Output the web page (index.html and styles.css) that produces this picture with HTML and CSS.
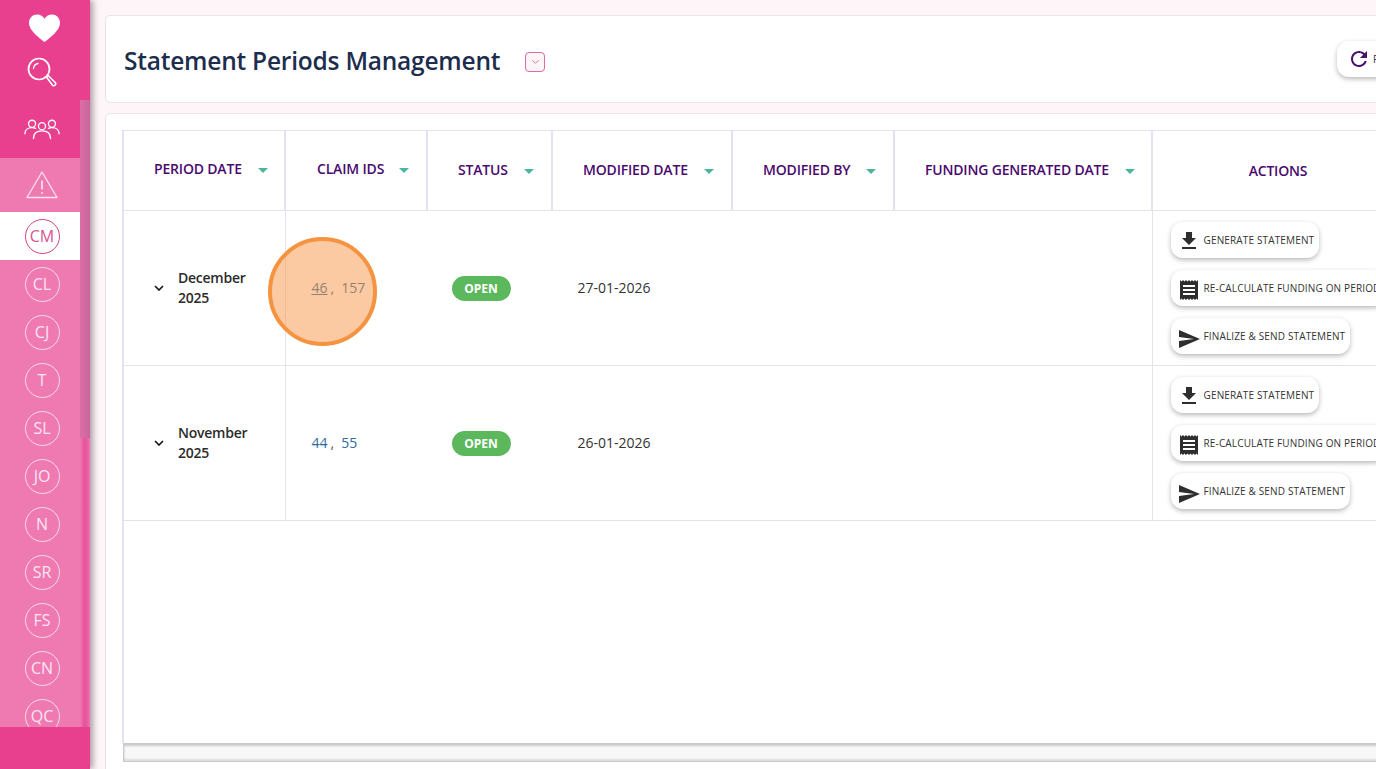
FILE: index.html
```html
<!DOCTYPE html>
<html lang="en">
<head>
<meta charset="utf-8">
<title>Statement Periods Management</title>
<link rel="stylesheet" href="styles.css">
</head>
<body>
<aside class="sidebar">
  <div class="side-top">
    <svg class="ic-heart" viewBox="0 0 34 30"><path d="M17 29.500C12 25 1 18 1 9.500 1 4.500 5 1 9.500 1 12.800 1 15.500 2.800 17 5.500 18.500 2.800 21.200 1 24.500 1 29 1 33 4.500 33 9.500 33 18 22 25 17 29.500Z" fill="#fff"/></svg>
    <svg class="ic-search" viewBox="0 0 30 30" fill="none" stroke="#fff"><circle cx="12" cy="12" r="10.500" stroke-width="1.700"/><path d="M6.500 11.500C6.800 8.800 8.600 7 11 6.500" stroke-width="1.300" stroke-linecap="round"/><path d="M19.500 20 21.200 18.500 28.200 25.500C29 26.500 28.800 27.500 28 28.200 27.200 28.900 26.200 28.900 25.500 28.200Z" stroke-width="1.600"/></svg>
    <svg class="ic-people" viewBox="0 0 38 22" fill="none" stroke="#fff" stroke-width="1.400" stroke-linecap="round"><circle cx="8.500" cy="5.500" r="3.700"/><circle cx="19" cy="8" r="3.700"/><circle cx="29.500" cy="5.500" r="3.700"/><path d="M1 16c0-4 3-6.500 7.500-6.500 1.500 0 2.700.3 3.700.8"/><path d="M37 16c0-4-3-6.500-7.500-6.500-1.500 0-2.700.3-3.700.8"/><path d="M10 21c0-5 3.500-8 9-8s9 3 9 8"/></svg>
  </div>
  <nav class="side-list">
    <div class="side-alert">
      <svg class="ic-alert" viewBox="0 0 32 28" fill="none" stroke="#fbe3ef" stroke-width="1.300" stroke-linejoin="round"><path d="M16 1.500 31 27H1Z"/><path d="M16 10v9" stroke-width="1.800"/><circle cx="16" cy="22.500" r="1" fill="#fbe3ef" stroke="none"/></svg>
    </div>
    <div class="side-item active"><span class="badge">CM</span></div>
    <div class="side-item"><span class="badge">CL</span></div>
    <div class="side-item"><span class="badge">CJ</span></div>
    <div class="side-item"><span class="badge">T</span></div>
    <div class="side-item"><span class="badge">SL</span></div>
    <div class="side-item"><span class="badge">JO</span></div>
    <div class="side-item"><span class="badge">N</span></div>
    <div class="side-item"><span class="badge">SR</span></div>
    <div class="side-item"><span class="badge">FS</span></div>
    <div class="side-item"><span class="badge">CN</span></div>
    <div class="side-item"><span class="badge">QC</span></div>
  </nav>
  <div class="side-bottom"></div>
  <div class="side-scroll"><div class="side-thumb"></div></div>
</aside>

<main class="main">
  <section class="card title-card">
    <h1 class="title">Statement Periods Management</h1>
    <button class="collapse" aria-label="Collapse"><svg viewBox="0 0 10 6" fill="none" stroke="#d9669f" stroke-width="1"><path d="M1.500 1 5 4.500 8.500 1"/></svg></button>
    <button class="refresh"><svg viewBox="0 0 24 24"><path d="M17.650 6.350C16.200 4.900 14.210 4 12 4c-4.420 0-7.990 3.580-7.990 8s3.570 8 7.990 8c3.730 0 6.840-2.550 7.730-6h-2.080c-.82 2.330-3.040 4-5.650 4-3.310 0-6-2.690-6-6s2.690-6 6-6c1.660 0 3.140.69 4.220 1.780L13 11h7V4l-2.350 2.350z" fill="#47106b"/></svg><span>Refresh</span></button>
  </section>

  <section class="card table-card">
    <div class="table-wrap">
      <table class="grid">
        <colgroup>
          <col class="c1"><col class="c2"><col class="c3"><col class="c4"><col class="c5"><col class="c6"><col class="c7">
        </colgroup>
        <thead>
          <tr>
            <th class="raise"><span class="th-in">PERIOD DATE<i class="caret"></i></span></th>
            <th class="raise th-claim"><span class="th-in">CLAIM IDS<i class="caret"></i></span></th>
            <th><span class="th-in">STATUS<i class="caret"></i></span></th>
            <th><span class="th-in">MODIFIED DATE<i class="caret"></i></span></th>
            <th><span class="th-in">MODIFIED BY<i class="caret"></i></span></th>
            <th><span class="th-in">FUNDING GENERATED DATE<i class="caret"></i></span></th>
            <th class="th-actions">ACTIONS</th>
          </tr>
        </thead>
        <tbody>
          <tr>
            <td><div class="period"><svg class="chev" viewBox="0 0 10 6" fill="none" stroke="#111" stroke-width="1.600"><path d="M1 1 5 5 9 1"/></svg><span>December<br>2025</span></div></td>
            <td class="ids"><a class="id-link hover">46</a><span class="sep">,</span><a class="id-link">157</a></td>
            <td class="status"><span class="pill">OPEN</span></td>
            <td class="date">27-01-2026</td>
            <td></td>
            <td></td>
            <td class="actions">
              <button class="act"><svg viewBox="0 0 24 24"><path d="M19 9h-4V3H9v6H5l7 7 7-7zM5 18v2h14v-2H5z"/></svg><span>GENERATE STATEMENT</span></button>
              <button class="act"><svg viewBox="0 0 24 24"><path d="M18 17H6v-2h12v2zm0-4H6v-2h12v2zm0-4H6V7h12v2zM3 22l1.500-1.500L6 22l1.500-1.500L9 22l1.500-1.500L12 22l1.500-1.500L15 22l1.500-1.500L18 22l1.500-1.500L21 22V2l-1.500 1.500L18 2l-1.500 1.500L15 2l-1.500 1.500L12 2l-1.500 1.500L9 2 7.500 3.500 6 2 4.500 3.500 3 2v20z"/></svg><span>RE-CALCULATE FUNDING ON PERIOD</span></button>
              <button class="act"><svg viewBox="0 0 24 24"><path d="M2.010 21 23 12 2.010 3 2 10l15 2-15 2z"/></svg><span>FINALIZE &amp; SEND STATEMENT</span></button>
            </td>
          </tr>
          <tr>
            <td><div class="period"><svg class="chev" viewBox="0 0 10 6" fill="none" stroke="#111" stroke-width="1.600"><path d="M1 1 5 5 9 1"/></svg><span>November<br>2025</span></div></td>
            <td class="ids"><a class="id-link">44</a><span class="sep">,</span><a class="id-link">55</a></td>
            <td class="status"><span class="pill">OPEN</span></td>
            <td class="date">26-01-2026</td>
            <td></td>
            <td></td>
            <td class="actions">
              <button class="act"><svg viewBox="0 0 24 24"><path d="M19 9h-4V3H9v6H5l7 7 7-7zM5 18v2h14v-2H5z"/></svg><span>GENERATE STATEMENT</span></button>
              <button class="act"><svg viewBox="0 0 24 24"><path d="M18 17H6v-2h12v2zm0-4H6v-2h12v2zm0-4H6V7h12v2zM3 22l1.500-1.500L6 22l1.500-1.500L9 22l1.500-1.500L12 22l1.500-1.500L15 22l1.500-1.500L18 22l1.500-1.500L21 22V2l-1.500 1.500L18 2l-1.500 1.500L15 2l-1.500 1.500L12 2l-1.500 1.500L9 2 7.500 3.500 6 2 4.500 3.500 3 2v20z"/></svg><span>RE-CALCULATE FUNDING ON PERIOD</span></button>
              <button class="act"><svg viewBox="0 0 24 24"><path d="M2.010 21 23 12 2.010 3 2 10l15 2-15 2z"/></svg><span>FINALIZE &amp; SEND STATEMENT</span></button>
            </td>
          </tr>
        </tbody>
      </table>
      <div class="h-scroll"></div>
    </div>
  </section>
</main>
<div class="spot"></div>
</body>
</html>
```
FILE: styles.css
```css
* { box-sizing: border-box; }
html, body { height: 100%; }
body {
  margin: 0;
  display: flex;
  height: 769px;
  overflow: hidden;
  background: #fdf5f8;
  font-family: "Open Sans", "Noto Sans", sans-serif;
  color: #333;
}
.sidebar {
  position: relative;
  flex: 0 0 90px;
  width: 90px;
  height: 769px;
  display: flex;
  flex-direction: column;
  background: #e8408f;
  box-shadow: 3px 0 6px rgba(110, 85, 100, 0.55);
  z-index: 2;
}
.side-top {
  flex: 0 0 158px;
  width: 84px;
  padding-top: 13px;
  display: flex;
  flex-direction: column;
  align-items: center;
}
.ic-heart { width: 33px; height: 30px; margin-left: 5px; }
.ic-search { width: 30px; height: 30px; margin-top: 14px; }
.ic-people { width: 36px; height: 22px; margin-top: 31px; }
.side-list {
  flex: 0 0 569px;
  width: 80px;
  overflow: hidden;
  background: #ef79b1;
}
.side-alert {
  height: 54px;
  padding-left: 4px;
  padding-bottom: 1px;
  display: flex;
  align-items: center;
  justify-content: center;
}
.ic-alert { width: 32px; height: 29px; }
.side-item {
  height: 48px;
  padding-left: 4px;
  display: flex;
  align-items: center;
  justify-content: center;
}
.side-item.active { background: #fff; }
.badge {
  width: 35px;
  height: 35px;
  border-radius: 50%;
  border: 1px solid #fbdcec;
  color: #fde6f1;
  font-size: 16px;
  display: flex;
  align-items: center;
  justify-content: center;
}
.active .badge { border-color: #d83e86; color: #d8558f; }
.side-bottom { flex: 1; background: #e8408f; }
.side-scroll {
  position: absolute;
  left: 80px;
  top: 100px;
  width: 10px;
  height: 627px;
  background: linear-gradient(90deg, #ef79b1, #e8559f 40%, #e85aa2 70%, #ee77b0);
}
.side-thumb { height: 338px; background: linear-gradient(90deg, #da6fa5, #c9659b); }

.main {
  flex: 1;
  min-width: 0;
  padding: 15px 0 0 15px;
  display: flex;
  flex-direction: column;
  gap: 10px;
  overflow: hidden;
}
.card {
  width: 1400px;
  background: #fff;
  border: 1px solid #e8e4e8;
  border-radius: 5px;
}
.title-card {
  flex: 0 0 88px;
  display: flex;
  align-items: center;
  padding-left: 18px;
}
.title {
  margin: 2px 0 0;
  font-size: 24.5px;
  font-weight: 600;
  color: #1d2d4d;
  letter-spacing: -0.22px;
  white-space: nowrap;
}
.collapse {
  flex: none;
  margin-left: 25px;
  margin-top: 5px;
  width: 20px;
  height: 20px;
  padding: 0;
  border: 1px solid #dd6aa3;
  border-radius: 4px;
  background: #fdf5f8;
  display: flex;
  align-items: center;
  justify-content: center;
}
.collapse svg { width: 9px; height: 6px; }
.refresh {
  flex: none;
  position: absolute;
  left: 1337px;
  top: 41px;
  width: 100px;
  height: 36px;
  border: 0;
  border-radius: 12px;
  background: #fff;
  box-shadow: 0 2px 5px rgba(0, 0, 0, 0.28);
  display: flex;
  align-items: center;
  gap: 2px;
  padding: 0 0 0 10px;
  font: 10px "Open Sans", sans-serif;
  color: #333;
}
.refresh svg { width: 24px; height: 24px; flex: none; }
.table-card {
  flex: 0 0 680px;
  padding: 16px 0 0 16px;
}
.table-wrap { width: 1360px; height: 613px; position: relative; border-left: 2px solid #e3e1f2; }
.grid {
  width: 1279px;
  table-layout: fixed;
  border-collapse: collapse;
}
.c1 { width: 161px; }
.c2 { width: 142px; }
.c3 { width: 125px; }
.c4 { width: 180px; }
.c5 { width: 162px; }
.c6 { width: 258px; }
.c7 { width: 251px; }
th {
  height: 80px;
  padding: 0 0 2px 30px;
  text-align: left;
  font-size: 14px;
  font-weight: 600;
  color: #4a0a6e;
  letter-spacing: -0.18px;
  border-top: 1px solid #e3e1f2;
  border-right: 2px solid #e3e1f2;
  border-bottom: 1px solid #e3e3ee;
  white-space: nowrap;
}
th.raise { padding-bottom: 4px; }
th.th-claim { padding-left: 31px; }
th.th-claim .caret { margin-left: 15px; }
th.th-actions { padding: 0; text-align: center; border-right: 0; }
.th-in { display: inline-flex; align-items: center; }
.caret {
  width: 0;
  height: 0;
  margin-left: 16px;
  margin-top: 3px;
  border-left: 5px solid transparent;
  border-right: 5px solid transparent;
  border-top: 5px solid #4cb5a0;
}
td {
  height: 155px;
  padding: 0;
  font-size: 14px;
  color: #333;
  border-bottom: 1px solid #e3e3ee;
  border-right: 1px solid transparent;
}
td:first-child { border-right: 1px solid #e3e3ee; }
td:nth-child(6) { border-right: 1px solid #e3e3ee; }
.period {
  display: flex;
  align-items: center;
  gap: 14px;
  padding-left: 30px;
  font-weight: 600;
  line-height: 20px;
  color: #2b2b2b;
  letter-spacing: -0.25px;
}
.chev { width: 10px; height: 6px; flex: none; }
.ids { padding: 0 0 2px 26px; color: #2d6b9c; }
.id-link { color: #2d6b9c; }
.id-link.hover { text-decoration: underline; }
.sep { margin: 0 7px 0 3px; color: #555; }
.status { padding-left: 24px; }
.pill {
  display: inline-block;
  width: 59px;
  height: 25px;
  border-radius: 13px;
  background: #5cb85c;
  color: #fff;
  font-size: 12px;
  font-weight: 700;
  line-height: 25px;
  text-align: center;
}
.date { padding: 0 0 2px 25px; }
.actions { padding: 0 0 0 18px; vertical-align: middle; }
.act {
  display: flex;
  align-items: center;
  height: 36px;
  width: max-content;
  margin: 12px 0;
  padding: 0 5px 0 6px;
  border: 0;
  border-radius: 12px;
  background: #fff;
  box-shadow: 0 2px 5px rgba(0, 0, 0, 0.28);
  font: 10px "Open Sans", sans-serif;
  letter-spacing: 0.15px;
  color: #333;
  white-space: nowrap;
}
.act:first-child { margin-top: 11px; }
.act:last-child { margin-bottom: 11px; }
.act svg { flex: none; width: 24px; height: 24px; fill: #2e2e2e; }
.act:nth-child(1) svg { transform: translateY(1px); }
.act:nth-child(2) svg { transform: translateY(2px); }
.act:nth-child(3) svg { transform: translateY(3px); }
.act span { margin-left: 3px; }
.h-scroll {
  position: absolute;
  left: -1px;
  top: 613px;
  width: 1360px;
  height: 19px;
  background: #f7f7f8;
  border: 1px solid #c9c9d0;
  border-right: 0;
  box-shadow: inset 0 2px 2px rgba(0, 0, 0, 0.18), inset 0 -2px 2px rgba(0, 0, 0, 0.1);
}
.spot {
  position: absolute;
  left: 268px;
  top: 237px;
  width: 109px;
  height: 109px;
  border-radius: 50%;
  background: rgba(250, 150, 70, 0.5);
  border: 4px solid #f59340;
  z-index: 3;
}
```
